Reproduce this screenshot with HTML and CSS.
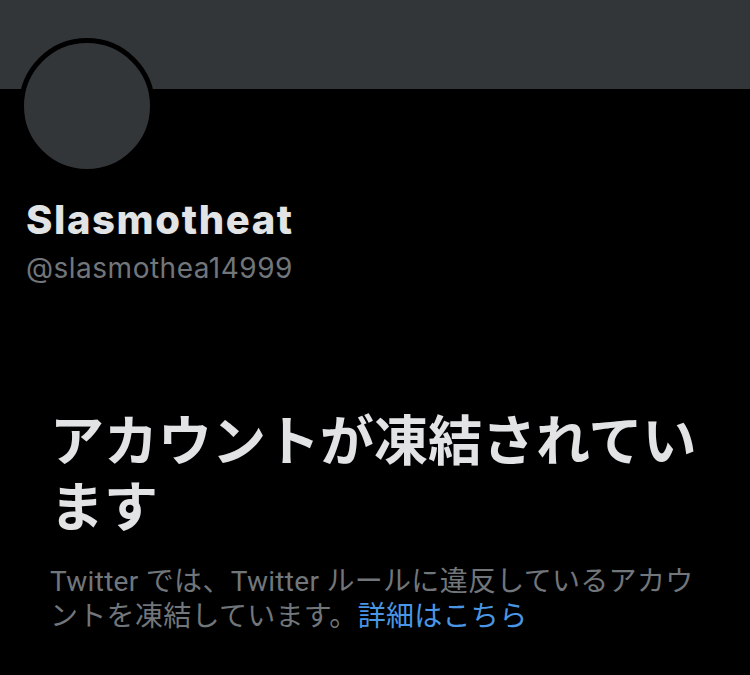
FILE: index.html
```html
<!DOCTYPE html>
<html lang="ja">
<head>
    <meta charset="utf-8">
    <title>Slasmotheat</title>
    <link rel="stylesheet" href="styles.css">
</head>
<body>
    <div class="banner"></div>

    <div class="profile">
        <div class="avatar"></div>
        <div class="name">Slasmotheat</div>
        <div class="handle">@slasmothea14999</div>
    </div>

    <div class="notice">
        <h1 class="notice-title">アカウントが凍結されています</h1>
        <p class="notice-text">Twitter では、Twitter ルールに違反しているアカウントを凍結しています。<a href="#" class="notice-link">詳細はこちら</a></p>
    </div>
</body>
</html>
```

FILE: styles.css
```css
* {
    box-sizing: border-box;
}

body {
    margin: 0;
    background-color: #000000;
    font-family: Inter, Roboto, "Noto Sans CJK JP", sans-serif;
    overflow: hidden;
}

.banner {
    height: 89px;
    background-color: #333639;
}

.profile {
    padding: 0 26px;
}

.avatar {
    width: 136px;
    height: 136px;
    margin: -51px 0 0 -7px;
    border-radius: 50%;
    border: 5px solid #000000;
    background-color: #333639;
}

.name {
    margin-top: 23px;
    font-size: 40px;
    font-weight: 800;
    line-height: 46px;
    color: #e1e3e4;
    letter-spacing: 1.6px;
}

.handle {
    margin-top: 8px;
    font-size: 28px;
    line-height: 34px;
    color: #71767b;
    letter-spacing: 0.5px;
}

.notice {
    padding: 0 50px;
    margin-top: 120px;
}

.notice-title {
    margin: 0;
    font-family: "Noto Sans CJK JP", sans-serif;
    font-size: 54px;
    font-weight: 700;
    line-height: 66px;
    color: #e1e3e4;
}

.notice-text {
    margin: 27px 0 0;
    font-family: Roboto, "Noto Sans CJK JP", sans-serif;
    font-size: 28px;
    line-height: 35px;
    color: #71767b;
    letter-spacing: 0.3px;
}

.notice-link {
    color: #4a96e4;
    text-decoration: none;
}
```
